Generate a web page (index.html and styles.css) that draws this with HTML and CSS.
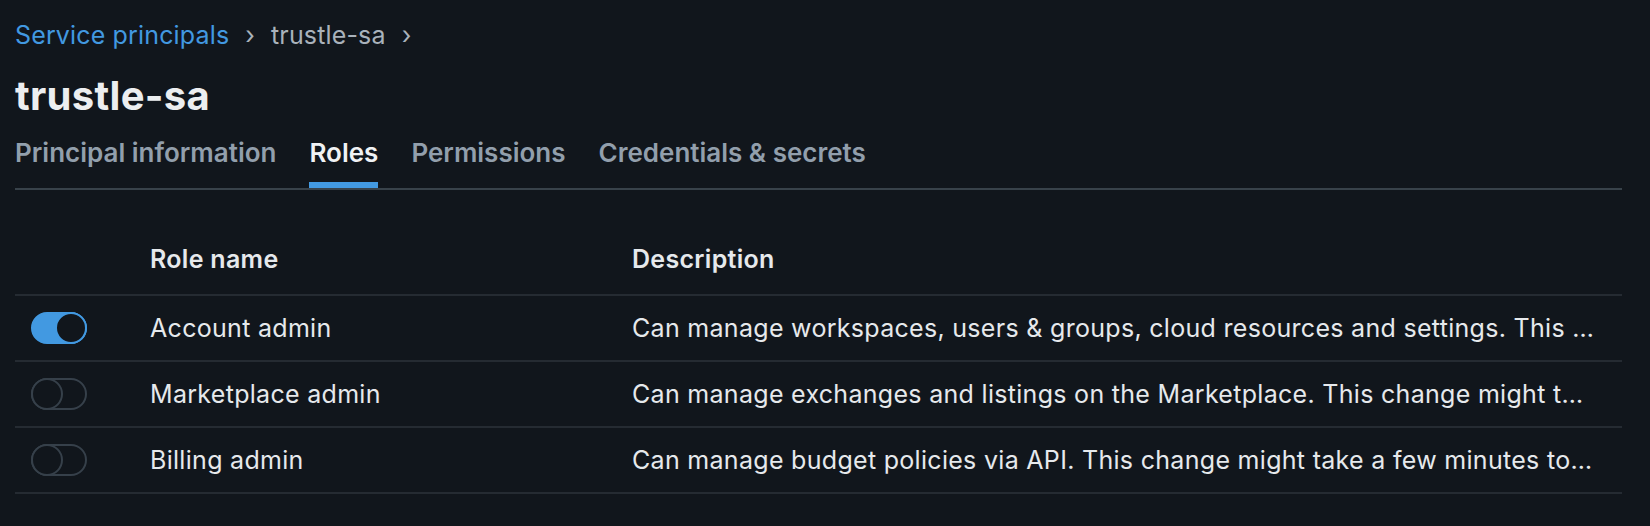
FILE: index.html
```html
<!DOCTYPE html>
<html lang="en">
<head>
<meta charset="utf-8">
<title>trustle-sa</title>
<link rel="stylesheet" href="styles.css">
</head>
<body>
<div class="page">
  <nav class="breadcrumb">
    <a class="crumb-link" href="#">Service principals</a>
    <span class="chev">›</span>
    <span class="crumb">trustle-sa</span>
    <span class="chev">›</span>
  </nav>
  <h1 class="title">trustle-sa</h1>
  <div class="tabs">
    <div class="tab">Principal information</div>
    <div class="tab active">Roles</div>
    <div class="tab">Permissions</div>
    <div class="tab">Credentials &amp; secrets</div>
  </div>
  <div class="table">
    <div class="row head">
      <div class="cell toggle-cell"></div>
      <div class="cell">Role name</div>
      <div class="cell">Description</div>
    </div>
    <div class="row">
      <div class="cell toggle-cell"><span class="switch on"><span class="knob"></span></span></div>
      <div class="cell">Account admin</div>
      <div class="cell desc">Can manage workspaces, users &amp; groups, cloud resources and settings. This change might take a few minutes to take effect.</div>
    </div>
    <div class="row">
      <div class="cell toggle-cell"><span class="switch"><span class="knob"></span></span></div>
      <div class="cell">Marketplace admin</div>
      <div class="cell desc">Can manage exchanges and listings on the Marketplace. This change might take a few minutes to take effect.</div>
    </div>
    <div class="row">
      <div class="cell toggle-cell"><span class="switch"><span class="knob"></span></span></div>
      <div class="cell">Billing admin</div>
      <div class="cell desc">Can manage budget policies via API. This change might take a few minutes to take effect.</div>
    </div>
  </div>
</div>
</body>
</html>
```

FILE: styles.css
```css
* { box-sizing: border-box; }
html, body {
  margin: 0;
  padding: 0;
  background: #11161c;
}
body {
  font-family: Inter, "Noto Sans", "Liberation Sans", sans-serif;
  color: #e6e9ec;
}
.page {
  padding: 17px 28px 0 15px;
}
.breadcrumb {
  display: flex;
  align-items: center;
  height: 36px;
  font-size: 25px;
  line-height: 36px;
  letter-spacing: 0.15px;
}
.crumb-link {
  color: #4299e1;
  text-decoration: none;
}
.chev {
  color: #a9b2bb;
  margin: 0 16px;
}
.crumb {
  color: #a9b2bb;
}
.title {
  margin: 19px 0 0 0;
  font-size: 40px;
  line-height: 48px;
  font-weight: 700;
  letter-spacing: 0.3px;
  color: #eceef0;
}
.tabs {
  display: flex;
  gap: 33px;
  margin-top: 15px;
  border-bottom: 2px solid #38424a;
}
.tab {
  font-size: 26px;
  line-height: 36px;
  font-weight: 600;
  color: #929fac;
  padding-bottom: 11px;
  border-bottom: 6px solid transparent;
}
.tab.active {
  color: #f0f2f4;
  border-bottom-color: #4299e1;
}
.row {
  display: grid;
  grid-template-columns: 135px 482px minmax(0, 1fr);
  align-items: center;
  height: 66px;
  border-bottom: 2px solid #252b32;
  font-size: 25px;
  line-height: 36px;
  letter-spacing: 0.3px;
}
.row.head {
  height: 106px;
  align-items: end;
  padding-bottom: 17px;
  font-weight: 600;
  letter-spacing: 0.3px;
}
.cell {
  white-space: nowrap;
  overflow: hidden;
  text-overflow: ellipsis;
}
.desc {
  padding-right: 26px;
}
.toggle-cell {
  padding-left: 16px;
  display: flex;
  align-items: center;
}
.switch {
  position: relative;
  display: block;
  width: 56px;
  height: 32px;
  border-radius: 16px;
  border: 2px solid #36404a;
}
.switch .knob {
  position: absolute;
  top: -2px;
  left: -2px;
  width: 32px;
  height: 32px;
  border-radius: 50%;
  border: 2px solid #36404a;
  background: #11161c;
}
.switch.on {
  background: #4299e1;
  border-color: #4299e1;
}
.switch.on .knob {
  left: auto;
  right: -2px;
  border-color: #4299e1;
  background: #11161c;
}
```
